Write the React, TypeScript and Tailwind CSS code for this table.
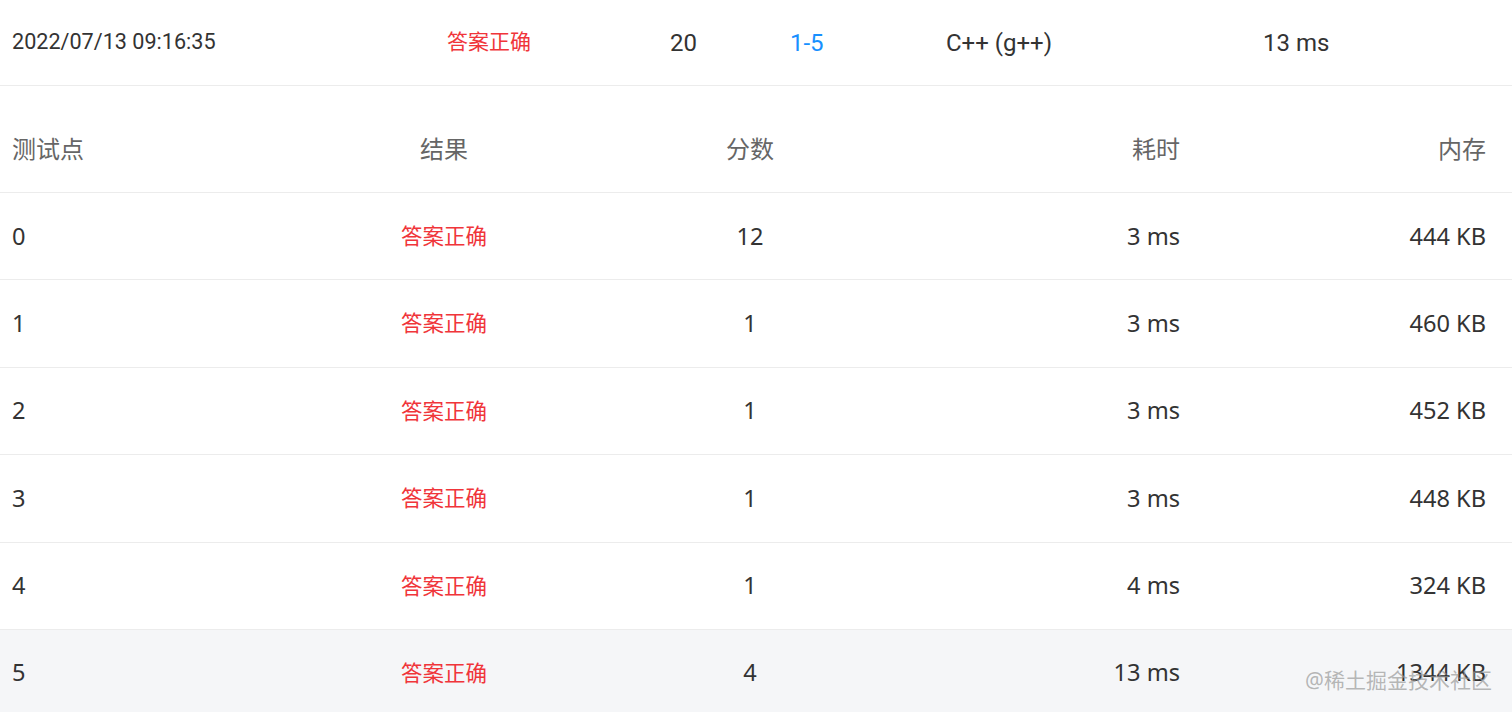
const rows = [
  { id: "0", score: "12", time: "3 ms", mem: "444 KB" },
  { id: "1", score: "1", time: "3 ms", mem: "460 KB" },
  { id: "2", score: "1", time: "3 ms", mem: "452 KB" },
  { id: "3", score: "1", time: "3 ms", mem: "448 KB" },
  { id: "4", score: "1", time: "4 ms", mem: "324 KB" },
  { id: "5", score: "4", time: "13 ms", mem: "1344 KB" },
];

const cols = "grid grid-cols-[300px_288px_324px_280px_1fr] items-center";

export default function App() {
  return (
    <div
      className="relative h-[712px] w-[1512px] overflow-hidden bg-white text-[#333]"
      style={{ fontFamily: '"Noto Sans", "Noto Sans CJK SC", sans-serif' }}
    >
      {/* submission summary */}
      <div className="grid h-[86px] grid-cols-[435px_223px_120px_156px_317px_1fr] items-center border-b border-[#ececec] font-['Roboto','Noto_Sans_CJK_SC',sans-serif] text-[24px]">
        <div className="pl-3 text-[21.6px]">2022/07/13 09:16:35</div>
        <div className="pl-3 text-[21px] text-[#f0353a]">答案正确</div>
        <div className="pl-3">20</div>
        <div className="pl-3 text-[#1890ff]">1-5</div>
        <div className="pl-3">C++ (g++)</div>
        <div className="pl-3">13 ms</div>
      </div>

      {/* test case table */}
      <div className={`${cols} h-[107px] border-b border-[#ececec] pt-5 text-[24px] text-[#666]`}>
        <div className="pl-3">测试点</div>
        <div className="text-center">结果</div>
        <div className="text-center">分数</div>
        <div className="pr-3 text-right">耗时</div>
        <div className="pr-[26px] text-right">内存</div>
      </div>

      {rows.map((r, i) => (
        <div
          key={r.id}
          className={`${cols} h-[87.4px] border-b border-[#ececec] text-[23.6px] ${
            i === rows.length - 1 ? "bg-[#f5f6f8]" : ""
          }`}
        >
          <div className="pl-3">{r.id}</div>
          <div className="text-center text-[21.5px] text-[#f0353a]">答案正确</div>
          <div className="text-center">{r.score}</div>
          <div className="pr-3 text-right">{r.time}</div>
          <div className="pr-[26px] text-right">{r.mem}</div>
        </div>
      ))}

      <div className="absolute bottom-[16px] right-[20px] text-[21px] text-[#999]/70">@稀土掘金技术社区</div>
    </div>
  );
}
